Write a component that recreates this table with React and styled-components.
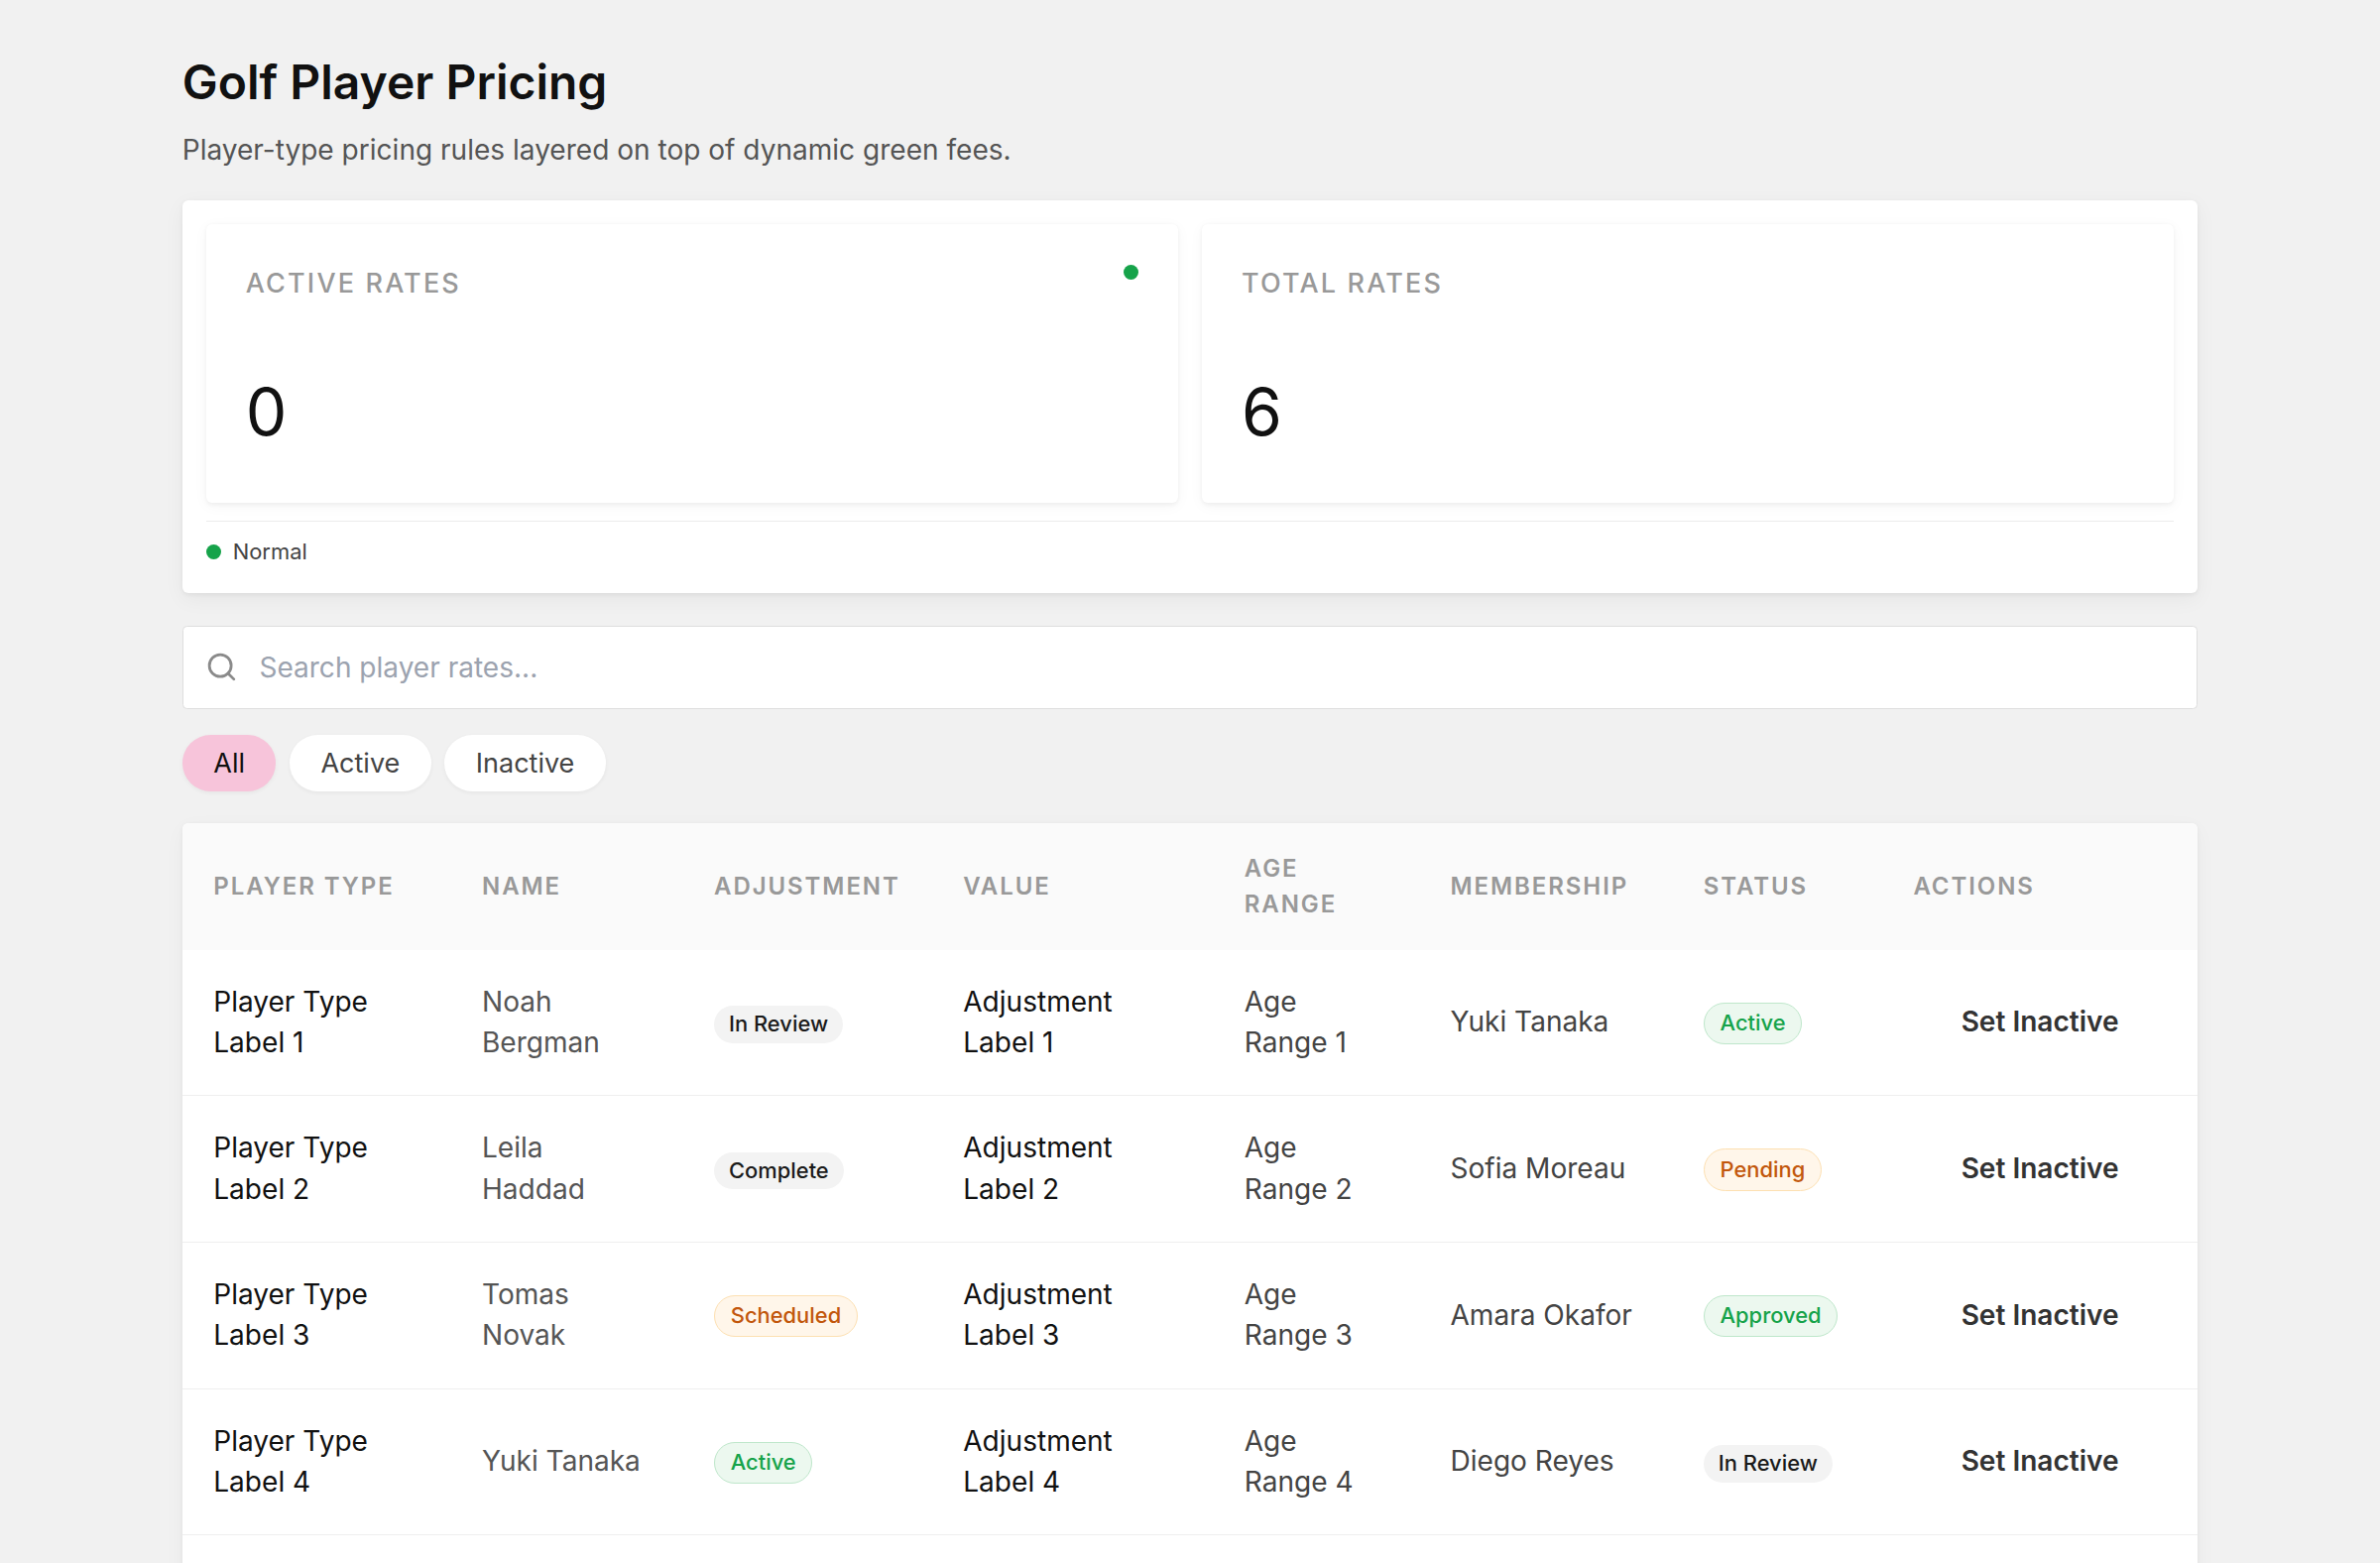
import styled, { createGlobalStyle } from "styled-components";
import { Search } from "lucide-react";

const GlobalStyle = createGlobalStyle`
  html {
    zoom: 1.5;
  }
  body {
    margin: 0;
    background: #f1f1f1;
    font-family: Inter, "Noto Sans", "Liberation Sans", sans-serif;
    color: #111;
  }
  * {
    box-sizing: border-box;
  }
`;

const Page = styled.div`
  max-width: 1355px;
  margin: 0 auto;
  padding: 36px 0 40px;
`;

const Title = styled.h1`
  margin: 0;
  font-size: 32px;
  font-weight: 600;
  line-height: 1.21;
  color: #111;
`;

const Subtitle = styled.p`
  margin: 12.5px 0 0;
  font-size: 18.7px;
  line-height: 27px;
  color: #555;
`;

const Panel = styled.section`
  margin-top: 20.5px;
  background: #fff;
  border-radius: 4px;
  padding: 16px;
  box-shadow: 0 1px 3px rgba(0, 0, 0, 0.05), 0 4px 14px rgba(0, 0, 0, 0.05);
`;

const StatGrid = styled.div`
  display: grid;
  grid-template-columns: 1fr 1fr;
  gap: 16px;
`;

const StatCard = styled.div`
  background: #fff;
  border-radius: 4px;
  padding: 28.5px 26.7px 34.3px;
  box-shadow: 0 1px 3px rgba(0, 0, 0, 0.05), 0 2px 10px rgba(0, 0, 0, 0.04);
`;

const StatHead = styled.div`
  display: flex;
  justify-content: space-between;
  align-items: flex-start;
`;

const StatLabel = styled.div`
  font-size: 18px;
  line-height: 22px;
  font-weight: 500;
  letter-spacing: 0.08em;
  text-transform: uppercase;
  color: #999;
`;

const Dot = styled.span`
  display: inline-block;
  width: 10px;
  height: 10px;
  border-radius: 50%;
  background: #16a34a;
  flex-shrink: 0;
  margin-top: ${(p) => p.$offset || 0}px;
`;

const StatValue = styled.div`
  margin-top: 49.3px;
  font-size: 44px;
  line-height: 53px;
  font-weight: 400;
  color: #111;
`;

const Divider = styled.hr`
  margin: 12px 0 0;
  border: 0;
  border-top: 1px solid #ececec;
`;

const Legend = styled.div`
  display: flex;
  align-items: center;
  gap: 8px;
  margin-top: 8.5px;
  height: 24px;
  font-size: 14.6px;
  color: #444;
`;

const SearchBar = styled.label`
  display: flex;
  align-items: center;
  gap: 14.5px;
  margin-top: 21.5px;
  height: 56px;
  padding: 0 16px 0 14.6px;
  background: #fff;
  border: 1px solid #dedede;
  border-radius: 3px;
  color: #8a8a8a;
`;

const SearchInput = styled.input`
  flex: 1;
  border: 0;
  outline: none;
  background: transparent;
  font-family: inherit;
  font-size: 18.7px;
  color: #222;
  padding: 0;

  &::placeholder {
    color: #9ca3af;
  }
`;

const Filters = styled.div`
  display: flex;
  gap: 9px;
  margin-top: 17.5px;
`;

const Pill = styled.button`
  height: 38px;
  padding: 0 21px;
  border: 0;
  border-radius: 999px;
  font-family: inherit;
  font-size: 18px;
  color: ${(p) => (p.$active ? "#111" : "#444")};
  background: ${(p) => (p.$active ? "#f7c4da" : "#fff")};
  box-shadow: 0 1px 3px rgba(0, 0, 0, 0.05);
  cursor: pointer;
`;

const TableCard = styled.div`
  margin-top: 21.5px;
  background: #fff;
  border-radius: 4px;
  overflow: hidden;
  box-shadow: 0 1px 3px rgba(0, 0, 0, 0.05), 0 4px 14px rgba(0, 0, 0, 0.04);
`;

const COLUMNS = "180.5px 156px 167.5px 189px 138.5px 170.2px 141.1px 1fr";

const HeadRow = styled.div`
  display: grid;
  grid-template-columns: ${COLUMNS};
  align-items: center;
  background: #fafafa;
`;

const HeadCell = styled.div`
  padding: 18.5px 21px;
  font-size: 16px;
  line-height: 24px;
  font-weight: 600;
  letter-spacing: 0.08em;
  text-transform: uppercase;
  color: #999;
`;

const Row = styled.div`
  display: grid;
  grid-template-columns: ${COLUMNS};
  align-items: center;
  border-bottom: 1px solid #efefef;
`;

const Cell = styled.div`
  padding: 21.3px ${(p) => p.$padRight || 21}px 21.3px 21px;
  font-size: 18.7px;
  line-height: 27.6px;
  color: ${(p) => p.$color || "#111"};
`;

const BADGE_TONES = {
  neutral: { bg: "#f3f3f3", border: "transparent", color: "#1a1a1a", pad: "4px 10px", bw: 0 },
  success: { bg: "#ecf8ef", border: "#bfe7cb", color: "#16a34a", pad: "5px 10.5px", bw: 1 },
  warning: { bg: "#fff6ea", border: "#fde0b2", color: "#c2570c", pad: "5px 10.5px", bw: 1 },
};

const Badge = styled.span`
  display: inline-block;
  padding: ${(p) => BADGE_TONES[p.$tone].pad};
  border: ${(p) => BADGE_TONES[p.$tone].bw}px solid ${(p) => BADGE_TONES[p.$tone].border};
  border-radius: 999px;
  background: ${(p) => BADGE_TONES[p.$tone].bg};
  color: ${(p) => BADGE_TONES[p.$tone].color};
  font-size: 14.6px;
  line-height: 17px;
  font-weight: 500;
  white-space: nowrap;
`;

const ActionButton = styled.button`
  display: block;
  width: 100%;
  padding: 0;
  border: 0;
  background: transparent;
  font-family: inherit;
  font-size: 18.7px;
  line-height: 27.6px;
  font-weight: 600;
  color: #333;
  text-align: center;
  cursor: pointer;
`;

const toneOf = {
  "In Review": "neutral",
  Complete: "neutral",
  Active: "success",
  Approved: "success",
  Pending: "warning",
  Scheduled: "warning",
};

const rates = [
  { id: 1, name: "Noah Bergman", adjustment: "In Review", member: "Yuki Tanaka", status: "Active" },
  { id: 2, name: "Leila Haddad", adjustment: "Complete", member: "Sofia Moreau", status: "Pending" },
  { id: 3, name: "Tomas Novak", adjustment: "Scheduled", member: "Amara Okafor", status: "Approved" },
  { id: 4, name: "Yuki Tanaka", adjustment: "Active", member: "Diego Reyes", status: "In Review" },
  { id: 5, name: "Sofia Moreau", adjustment: "Pending", member: "Noah Bergman", status: "Complete" },
  { id: 6, name: "Amara Okafor", adjustment: "Approved", member: "Leila Haddad", status: "Scheduled" },
];

const headers = ["Player Type", "Name", "Adjustment", "Value", "Age Range", "Membership", "Status", "Actions"];

export default function App() {
  return (
    <>
      <GlobalStyle />
      <Page>
        <Title>Golf Player Pricing</Title>
        <Subtitle>Player-type pricing rules layered on top of dynamic green fees.</Subtitle>

        <Panel>
          <StatGrid>
            <StatCard>
              <StatHead>
                <StatLabel>Active Rates</StatLabel>
                <Dot $offset={-1.5} />
              </StatHead>
              <StatValue>0</StatValue>
            </StatCard>
            <StatCard>
              <StatHead>
                <StatLabel>Total Rates</StatLabel>
              </StatHead>
              <StatValue>6</StatValue>
            </StatCard>
          </StatGrid>
          <Divider />
          <Legend>
            <Dot />
            Normal
          </Legend>
        </Panel>

        <SearchBar>
          <Search size={22} strokeWidth={2} />
          <SearchInput placeholder="Search player rates..." />
        </SearchBar>

        <Filters>
          <Pill $active>All</Pill>
          <Pill>Active</Pill>
          <Pill>Inactive</Pill>
        </Filters>

        <TableCard>
          <HeadRow>
            {headers.map((h) => (
              <HeadCell key={h}>{h}</HeadCell>
            ))}
          </HeadRow>
          {rates.map((r) => (
            <Row key={r.id}>
              <Cell>Player Type Label {r.id}</Cell>
              <Cell $color="#555" $padRight={25}>
                {r.name}
              </Cell>
              <Cell>
                <Badge $tone={toneOf[r.adjustment]}>{r.adjustment}</Badge>
              </Cell>
              <Cell $padRight={38}>Adjustment Label {r.id}</Cell>
              <Cell $color="#444" $padRight={37.5}>
                Age Range {r.id}
              </Cell>
              <Cell $color="#444">{r.member}</Cell>
              <Cell>
                <Badge $tone={toneOf[r.status]}>{r.status}</Badge>
              </Cell>
              <Cell>
                <ActionButton>Set Inactive</ActionButton>
              </Cell>
            </Row>
          ))}
        </TableCard>
      </Page>
    </>
  );
}
